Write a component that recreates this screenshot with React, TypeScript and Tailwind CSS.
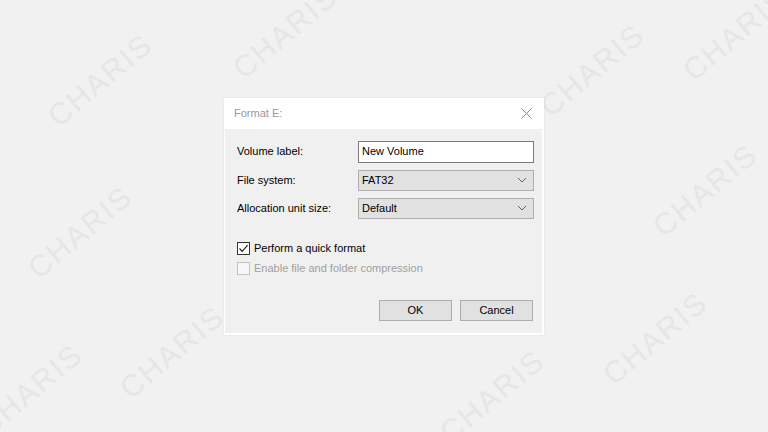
import React from "react";

const marks: [number, number][] = [
  [100, 80],
  [285, 32],
  [592, 70],
  [735, 34],
  [80, 232],
  [705, 190],
  [172, 352],
  [492, 396],
  [655, 338],
  [30, 390],
];

function Chevron() {
  return (
    <svg width="10" height="6" viewBox="0 0 10 6" className="shrink-0">
      <path d="M1 1 L5 5 L9 1" fill="none" stroke="#606060" strokeWidth="1" />
    </svg>
  );
}

function Select({ value }: { value: string }) {
  return (
    <div className="flex h-[21px] w-[176px] items-center justify-between border border-[#adadad] bg-[#e1e1e1] pl-[3px] pr-[6px] text-[11px] text-black">
      <span>{value}</span>
      <Chevron />
    </div>
  );
}

function Row({ label, children }: { label: string; children: React.ReactNode }) {
  return (
    <div className="flex items-center">
      <span className="w-[121px] text-[11px] text-black">{label}</span>
      {children}
    </div>
  );
}

export default function App() {
  return (
    <div className="relative flex h-[432px] w-[768px] items-center justify-center overflow-hidden bg-[#f1f1f1] font-['Liberation_Sans',Arial,sans-serif]">
      {marks.map(([x, y], i) => (
        <span
          key={i}
          className="pointer-events-none absolute -translate-x-1/2 -translate-y-1/2 -rotate-[40deg] text-[30px] tracking-[2px] text-[#e6e6e6] select-none"
          style={{ left: x, top: y }}
        >
          CHARIS
        </span>
      ))}

      <div className="relative flex h-[237px] w-[320px] flex-col bg-white pb-[2px] pl-[1px] pr-[2px] shadow-[0_0_2px_rgba(0,0,0,0.08)]">
        <div className="flex h-[31px] shrink-0 items-center justify-between pl-[9px] pr-[10px]">
          <span className="text-[11px] text-[#9a9a9a]">Format E:</span>
          <svg width="11" height="11" viewBox="0 0 11 11">
            <path d="M0.5 0.5 L10.5 10.5 M10.5 0.5 L0.5 10.5" stroke="#8a8a8a" strokeWidth="1" />
          </svg>
        </div>

        <div className="flex flex-1 flex-col bg-[#f0f0f0] pl-[12px] pr-[8px] pt-[12px]">
          <div className="flex flex-col gap-[7px]">
            <Row label="Volume label:">
              <div className="flex h-[22px] w-[176px] items-center border border-[#7a7a7a] bg-white pl-[3px] text-[11px] text-black">
                New Volume
              </div>
            </Row>
            <Row label="File system:">
              <Select value="FAT32" />
            </Row>
            <Row label="Allocation unit size:">
              <Select value="Default" />
            </Row>
          </div>

          <div className="mt-[23px] flex flex-col gap-[7px]">
            <div className="flex h-[13px] items-center gap-[4px]">
              <div className="flex h-[13px] w-[13px] items-center justify-center border border-[#333333] bg-white">
                <svg width="11" height="11" viewBox="0 0 11 11">
                  <path d="M1.5 5.5 L4.2 8.3 L9.6 2.2" fill="none" stroke="#222" strokeWidth="1.2" />
                </svg>
              </div>
              <span className="text-[11px] leading-[13px] text-black">Perform a quick format</span>
            </div>
            <div className="flex h-[13px] items-center gap-[4px]">
              <div className="h-[13px] w-[13px] border border-[#c4c4c4] bg-[#f6f6f6]" />
              <span className="text-[11px] leading-[13px] text-[#a0a0a0]">Enable file and folder compression</span>
            </div>
          </div>

          <div className="mt-[25px] flex justify-end gap-[8px] pr-[1px]">
            <button className="flex h-[21px] w-[73px] items-center justify-center border border-[#adadad] bg-[#e1e1e1] text-[11px] text-black">
              OK
            </button>
            <button className="flex h-[21px] w-[73px] items-center justify-center border border-[#adadad] bg-[#e1e1e1] text-[11px] text-black">
              Cancel
            </button>
          </div>
        </div>
      </div>
    </div>
  );
}
